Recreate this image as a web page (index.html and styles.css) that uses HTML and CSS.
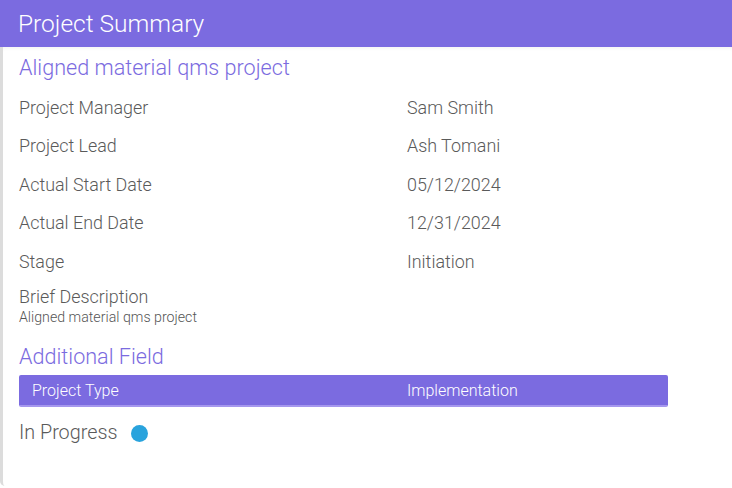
FILE: index.html
```html
<!DOCTYPE html>
<html lang="en">
<head>
<meta charset="utf-8">
<title>Project Summary</title>
<link rel="stylesheet" href="styles.css">
</head>
<body>
<div class="page">
  <header class="header">Project Summary</header>
  <section class="card">
    <h2 class="section-title">Aligned material qms project</h2>
    <div class="rows">
      <div class="row"><span class="label">Project Manager</span><span class="value">Sam Smith</span></div>
      <div class="row"><span class="label">Project Lead</span><span class="value">Ash Tomani</span></div>
      <div class="row"><span class="label">Actual Start Date</span><span class="value">05/12/2024</span></div>
      <div class="row"><span class="label">Actual End Date</span><span class="value">12/31/2024</span></div>
      <div class="row"><span class="label">Stage</span><span class="value">Initiation</span></div>
    </div>
    <div class="brief">
      <div class="brief-label">Brief Description</div>
      <div class="brief-text">Aligned material qms project</div>
    </div>
    <h2 class="section-title additional">Additional Field</h2>
    <div class="bar"><span class="bar-label">Project Type</span><span class="bar-value">Implementation</span></div>
    <div class="status"><span class="status-text">In Progress</span><span class="dot"></span></div>
  </section>
</div>
</body>
</html>
```
FILE: styles.css
```css
html, body {
  margin: 0;
  padding: 0;
  background: #ffffff;
}
body {
  font-family: Roboto, "Liberation Sans", sans-serif;
  font-weight: 300;
  color: #5a5a5a;
}
.page {
  width: 732px;
  height: 488px;
  display: flex;
  flex-direction: column;
  overflow: hidden;
}
.header {
  height: 47px;
  flex: none;
  background: #7b6be0;
  color: #ffffff;
  font-size: 24.5px;
  font-weight: 300;
  display: flex;
  align-items: center;
  padding-left: 18px;
  box-sizing: border-box;
  padding-bottom: 1px;
}
.card {
  flex: 1;
  border-left: 3px solid #dcdcdc;
  border-bottom-left-radius: 5px;
  padding-left: 16px;
  box-shadow: inset 0 4px 4px -3px rgba(0,0,0,0.06);
  margin-bottom: 2px;
}
.section-title {
  margin: 9px 0 0 0;
  font-size: 21.6px;
  line-height: 24px;
  font-weight: 300;
  color: #7b6be0;
}
.rows {
  margin-top: 8px;
}
.row {
  height: 38.5px;
  display: flex;
  align-items: center;
  font-size: 17.9px;
}
.label {
  width: 388px;
}
.brief {
  margin-top: 6px;
}
.brief-label {
  font-size: 17.9px;
  line-height: 20px;
}
.brief-text {
  font-size: 14.2px;
  line-height: 16px;
  margin-top: 2px;
  color: #555555;
}
.additional {
  margin-top: 20px;
}
.bar {
  margin-top: 6px;
  width: 649px;
  height: 32px;
  box-sizing: border-box;
  background: #7b6be0;
  border-bottom: 2px solid #a597ee;
  border-radius: 2px;
  display: flex;
  align-items: center;
  padding-left: 13px;
  padding-top: 1px;
  color: #ffffff;
  font-size: 16px;
  font-weight: 300;
}
.bar-label {
  width: 375px;
}
.status {
  margin-top: 15px;
  display: flex;
  align-items: center;
  font-size: 19.8px;
  line-height: 22px;
}
.dot {
  width: 17px;
  height: 17px;
  border-radius: 50%;
  background: #29a3dd;
  margin-left: 14px;
  margin-top: 2px;
}
```
